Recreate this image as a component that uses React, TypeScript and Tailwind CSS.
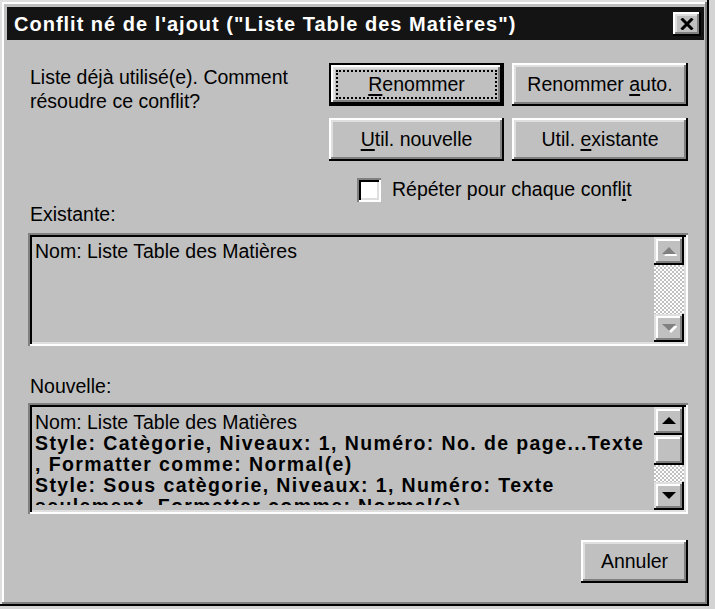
import React from 'react';

const raised =
  'shadow-[inset_-2px_-2px_0_#000,inset_2px_2px_0_#fff,inset_-4px_-4px_0_#808080,inset_4px_4px_0_#dfdfdf]';
const frame =
  'shadow-[inset_-2px_-2px_0_#000,inset_2px_2px_0_#dfdfdf,inset_-4px_-4px_0_#808080,inset_4px_4px_0_#fff]';
const sunken =
  'shadow-[inset_2px_2px_0_#808080,inset_-2px_-2px_0_#fff,inset_4px_4px_0_#000,inset_-4px_-4px_0_#dfdfdf]';
const checker =
  'bg-[image:repeating-conic-gradient(#fff_0_25%,#c0c0c0_0_50%)] bg-[length:4px_4px]';

function Key({ children }: { children: React.ReactNode }) {
  return <span className="underline decoration-[1.5px] underline-offset-[3px]">{children}</span>;
}

function Button({ children, isDefault }: { children: React.ReactNode; isDefault?: boolean }) {
  if (isDefault) {
    return (
      <div className="h-[43px] border-2 border-black bg-[#c0c0c0]">
        <div className={`h-full ${raised} p-[5px]`}>
          <div className="h-full border-2 border-dotted border-black flex items-center justify-center">
            {children}
          </div>
        </div>
      </div>
    );
  }
  return (
    <div className={`h-[43px] bg-[#c0c0c0] ${raised} flex items-center justify-center`}>
      {children}
    </div>
  );
}

function Arrow({ up, disabled }: { up?: boolean; disabled?: boolean }) {
  const pts = up ? '1,9 8,2 15,9' : '1,2 8,9 15,2';
  return (
    <svg width="16" height="12" viewBox="0 0 16 12">
      {disabled && <polygon points={pts} transform="translate(2,2)" fill="#fff" />}
      <polygon points={pts} fill={disabled ? '#808080' : '#000'} />
    </svg>
  );
}

function ScrollBtn({ up, disabled }: { up?: boolean; disabled?: boolean }) {
  return (
    <div className={`h-[28px] bg-[#c0c0c0] ${frame} flex items-center justify-center`}>
      <Arrow up={up} disabled={disabled} />
    </div>
  );
}

function ScrollBar({ disabled }: { disabled?: boolean }) {
  return (
    <div className="w-[30px] flex flex-col">
      <ScrollBtn up disabled={disabled} />
      {!disabled && <div className={`h-[30px] bg-[#c0c0c0] ${frame}`} />}
      <div className={`flex-1 ${checker}`} />
      <ScrollBtn disabled={disabled} />
    </div>
  );
}

export default function App() {
  return (
    <div className="w-[715px] h-[609px] bg-[#d4d4d4] overflow-hidden font-['Liberation_Sans',Arial,sans-serif] text-[19.5px] text-black">
      <div className={`w-[709px] h-[606px] bg-[#c0c0c0] ${frame} pt-[7px] pl-[7px] pr-[5px] flex flex-col`}>
        {/* barre de titre */}
        <div className="h-[33px] bg-[#141414] flex items-center pl-[7px] pr-[3px]">
          <span className="text-white font-bold text-[20px] tracking-[1px] whitespace-nowrap">
            Conflit né de l'ajout ("Liste Table des Matières")
          </span>
          <div className={`ml-auto w-[28px] h-[24px] bg-[#c0c0c0] ${raised} flex items-center justify-center`}>
            <svg width="14" height="12" viewBox="0 0 14 12">
              <path d="M1.5 0.5 L12.5 11.5 M12.5 0.5 L1.5 11.5" stroke="#000" strokeWidth="3" />
            </svg>
          </div>
        </div>

        <div className="pl-[21px] pr-[16px] flex flex-col">
          <div className="mt-[23px] flex">
            <div className="pl-[2px] pt-[2px] leading-[24px]">
              Liste déjà utilisé(e). Comment
              <br />
              résoudre ce conflit?
            </div>
            <div className="ml-auto grid grid-cols-[175px_176px] gap-x-[8px] gap-y-[12px]">
              <Button isDefault>
                <span>
                  <Key>R</Key>enommer
                </span>
              </Button>
              <Button>
                <span>
                  Renommer <Key>a</Key>uto.
                </span>
              </Button>
              <Button>
                <span>
                  <Key>U</Key>til. nouvelle
                </span>
              </Button>
              <Button>
                <span>
                  Util. <Key>e</Key>xistante
                </span>
              </Button>
            </div>
          </div>

          <div className="mt-[17px] ml-[329px] flex items-center h-[24px]">
            <div className={`w-[24px] h-[24px] bg-white ${sunken}`} />
            <span className="ml-[11px]">
              Répéter pour chaque confl<Key>i</Key>t
            </span>
          </div>

          <div className="mt-0 pl-[2px] leading-[24px]">Existante:</div>
          <div className={`mt-[7px] h-[113px] bg-[#c0c0c0] ${sunken} p-[4px] flex`}>
            <div className="flex-1 pl-[3px] pt-[4px] leading-[21px] whitespace-nowrap">
              Nom: Liste Table des Matières
            </div>
            <ScrollBar disabled />
          </div>

          <div className="mt-[28px] pl-[2px] leading-[24px]">Nouvelle:</div>
          <div className={`mt-[5px] h-[111px] bg-[#c0c0c0] ${sunken} p-[4px] flex`}>
            <div className="flex-1 h-[98px] overflow-hidden pl-[3px] pt-[5px] leading-[21px] whitespace-nowrap">
              <div>Nom: Liste Table des Matières</div>
              <div className="font-bold tracking-[1.4px]">Style: Catègorie, Niveaux: 1, Numéro: No. de page...Texte</div>
              <div className="font-bold tracking-[1.4px]">, Formatter comme: Normal(e)</div>
              <div className="font-bold tracking-[1.4px]">Style: Sous catègorie, Niveaux: 1, Numéro: Texte</div>
              <div className="font-bold tracking-[1.4px]">seulement, Formatter comme: Normal(e)</div>
            </div>
            <ScrollBar />
          </div>

          <div className="mt-[26px] flex justify-end">
            <div className="w-[107px]">
              <Button>Annuler</Button>
            </div>
          </div>
        </div>
      </div>
    </div>
  );
}
